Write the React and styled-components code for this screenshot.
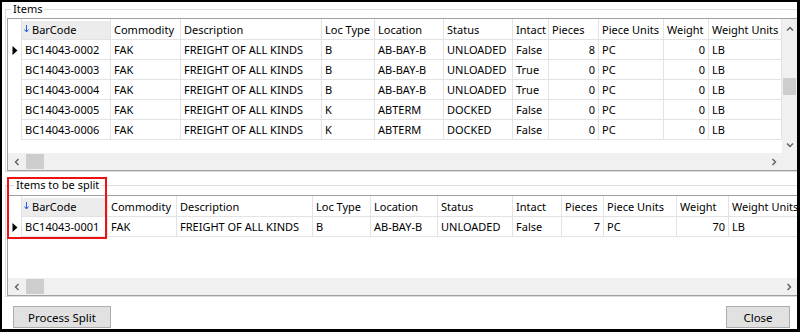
import React from "react";
import styled, { createGlobalStyle } from "styled-components";

const GlobalStyle = createGlobalStyle`
  html, body {
    margin: 0;
    padding: 0;
    background: #000;
  }
  body {
    font-family: "Noto Sans", "Liberation Sans", sans-serif;
    font-size: 11px;
    color: #000;
  }
  * {
    box-sizing: border-box;
  }
`;

const Window = styled.div`
  width: 800px;
  height: 332px;
  border-style: solid;
  border-color: #000;
  border-width: 2px 3px 3px 2px;
  background: #fff;
  display: flex;
  flex-direction: column;
  overflow: hidden;
`;

const GroupBox = styled.fieldset`
  flex: none;
  min-width: 0;
  margin: 0 0 0 3px;
  padding: 2px 0 0 1px;
  border: 1px solid #dcdcdc;
  border-right: none;
`;

const Legend = styled.legend`
  margin-left: ${(p) => p.$indent}px;
  padding: 0 2px;
  line-height: ${(p) => p.$lh}px;
  font-size: 11px;
`;

const SplitSection = styled.div`
  position: relative;
  margin-top: 5px;
`;

const Annotation = styled.div`
  position: absolute;
  left: 5px;
  top: 0;
  width: 100px;
  height: 62px;
  border: 2px solid #ee1111;
  pointer-events: none;
`;

/* grid */

const GridFrame = styled.div`
  height: ${(p) => p.$h}px;
  border-top: 1px solid #a0a0a0;
  border-left: 1px solid #a0a0a0;
  border-bottom: 1px solid #a0a0a0;
  display: flex;
  flex-direction: column;
  overflow: hidden;
`;

const GridMain = styled.div`
  flex: 1;
  min-height: 0;
  display: flex;
`;

const GridBody = styled.div`
  flex: 1;
  min-width: 0;
  overflow: hidden;
  background: #fff;
`;

const Row = styled.div`
  display: flex;
  height: ${(p) => p.$h}px;
`;

const RowHead = styled.div`
  flex: none;
  width: 14px;
  border-right: 1px solid #e3e3e3;
  display: flex;
  align-items: center;
  justify-content: center;
`;

const Cell = styled.div`
  flex: none;
  width: ${(p) => p.$w}px;
  padding: 0 3px;
  border-right: 1px solid #e3e3e3;
  border-bottom: 1px solid #e3e3e3;
  display: flex;
  align-items: center;
  justify-content: ${(p) => (p.$right ? "flex-end" : "flex-start")};
  white-space: nowrap;
  overflow: hidden;
`;

const HeadCell = styled(Cell)`
  justify-content: flex-start;
  padding-left: ${(p) => (p.$sorted ? 2 : 3)}px;
  background: ${(p) =>
    p.$sorted ? "linear-gradient(#fff 0 2px, #ececec 2px)" : "#fff"};
`;

const SortMark = styled.svg`
  flex: none;
  margin-right: 3px;
`;

/* scrollbars */

const VScroll = styled.div`
  flex: none;
  width: 15px;
  background: #f0f0f0;
  display: flex;
  flex-direction: column;
  align-items: center;
`;

const HScroll = styled.div`
  flex: none;
  height: 17px;
  background: #f0f0f0;
  display: flex;
  align-items: center;
`;

const ArrowBtn = styled.div`
  flex: none;
  width: ${(p) => p.$w}px;
  height: ${(p) => p.$h}px;
  display: flex;
  align-items: center;
  justify-content: center;
`;

const Track = styled.div`
  flex: 1;
  display: flex;
  flex-direction: ${(p) => (p.$vertical ? "column" : "row")};
  align-items: ${(p) => (p.$vertical ? "center" : "center")};
`;

const Thumb = styled.div`
  flex: none;
  background: #cdcdcd;
  width: ${(p) => (p.$vertical ? 13 : 18)}px;
  height: ${(p) => (p.$vertical ? 17 : 15)}px;
  margin: ${(p) => (p.$vertical ? "40px 0 0 0" : "0 0 0 1px")};
`;

const Corner = styled.div`
  flex: none;
  width: 15px;
  height: 17px;
  background: #f0f0f0;
`;

/* buttons */

const ButtonBar = styled.div`
  flex: 1;
  display: flex;
  justify-content: space-between;
  align-items: flex-start;
  padding: 9px 7px 0 11px;
`;

const Button = styled.button`
  width: ${(p) => p.$w}px;
  height: 22px;
  padding: 0;
  background: #e1e1e1;
  border: 1px solid #adadad;
  border-radius: 0;
  font-family: "Noto Sans", "Liberation Sans", sans-serif;
  font-size: 11.5px;
  color: #000;
`;

const Chevron = ({ dir }) => {
  const pts = {
    up: "1,4.5 4,1.5 7,4.5",
    down: "1,1.5 4,4.5 7,1.5",
    left: "4.5,1 1.5,4 4.5,7",
    right: "1.5,1 4.5,4 1.5,7",
  }[dir];
  const vert = dir === "up" || dir === "down";
  return (
    <svg width={vert ? 8 : 6} height={vert ? 6 : 8}>
      <polyline points={pts} fill="none" stroke="#606060" strokeWidth="1.4" />
    </svg>
  );
};

const RowMarker = () => (
  <svg width="6" height="9">
    <polygon points="0.5,0 5.5,4.5 0.5,9" fill="#000" />
  </svg>
);

const SortArrow = () => (
  <SortMark width="5" height="8">
    <line x1="2.5" y1="0" x2="2.5" y2="7" stroke="#2060e0" strokeWidth="1" />
    <polyline points="0.5,4.5 2.5,7 4.5,4.5" fill="none" stroke="#2060e0" strokeWidth="1" />
  </SortMark>
);

const DataGrid = ({ columns, rows, height, fillerHeight, vScroll }) => (
  <GridFrame $h={height}>
    <GridMain>
      <GridBody>
        <Row $h={21}>
          <RowHead />
          {columns.map((c, i) => (
            <HeadCell key={c.title} $w={c.w} $sorted={i === 0}>
              {i === 0 && <SortArrow />}
              {c.title}
            </HeadCell>
          ))}
        </Row>
        {rows.map((r, ri) => (
          <Row key={r[0]} $h={20}>
            <RowHead>{ri === 0 && <RowMarker />}</RowHead>
            {columns.map((c, i) => (
              <Cell key={c.title} $w={c.w} $right={c.right}>
                {r[i]}
              </Cell>
            ))}
          </Row>
        ))}
        <div style={{ height: fillerHeight }} />
      </GridBody>
      {vScroll && (
        <VScroll>
          <ArrowBtn $w={15} $h={19}>
            <Chevron dir="up" />
          </ArrowBtn>
          <Track $vertical>
            <Thumb $vertical />
          </Track>
          <ArrowBtn $w={15} $h={17}>
            <Chevron dir="down" />
          </ArrowBtn>
        </VScroll>
      )}
    </GridMain>
    <HScroll>
      <ArrowBtn $w={17} $h={17}>
        <Chevron dir="left" />
      </ArrowBtn>
      <Track>
        <Thumb />
      </Track>
      <ArrowBtn $w={17} $h={17}>
        <Chevron dir="right" />
      </ArrowBtn>
      {vScroll && <Corner />}
    </HScroll>
  </GridFrame>
);

const itemColumns = [
  { title: "BarCode", w: 89 },
  { title: "Commodity", w: 70 },
  { title: "Description", w: 141 },
  { title: "Loc Type", w: 53 },
  { title: "Location", w: 69 },
  { title: "Status", w: 69 },
  { title: "Intact", w: 36 },
  { title: "Pieces", w: 50, right: true },
  { title: "Piece Units", w: 65 },
  { title: "Weight", w: 45, right: true },
  { title: "Weight Units", w: 73 },
];

const splitColumns = [
  { title: "BarCode", w: 86 },
  { title: "Commodity", w: 69 },
  { title: "Description", w: 136 },
  { title: "Loc Type", w: 58 },
  { title: "Location", w: 67 },
  { title: "Status", w: 75 },
  { title: "Intact", w: 49 },
  { title: "Pieces", w: 42, right: true },
  { title: "Piece Units", w: 73 },
  { title: "Weight", w: 52, right: true },
  { title: "Weight Units", w: 82 },
];

const FAK = "FREIGHT OF ALL KINDS";

const items = [
  ["BC14043-0002", "FAK", FAK, "B", "AB-BAY-B", "UNLOADED", "False", "8", "PC", "0", "LB"],
  ["BC14043-0003", "FAK", FAK, "B", "AB-BAY-B", "UNLOADED", "True", "0", "PC", "0", "LB"],
  ["BC14043-0004", "FAK", FAK, "B", "AB-BAY-B", "UNLOADED", "True", "0", "PC", "0", "LB"],
  ["BC14043-0005", "FAK", FAK, "K", "ABTERM", "DOCKED", "False", "0", "PC", "0", "LB"],
  ["BC14043-0006", "FAK", FAK, "K", "ABTERM", "DOCKED", "False", "0", "PC", "0", "LB"],
];

const splitItems = [
  ["BC14043-0001", "FAK", FAK, "B", "AB-BAY-B", "UNLOADED", "False", "7", "PC", "70", "LB"],
];

const App = () => (
  <>
    <GlobalStyle />
    <Window>
      <GroupBox>
        <Legend $indent={4} $lh={14}>
          Items
        </Legend>
        <DataGrid
          columns={itemColumns}
          rows={items}
          height={153}
          fillerHeight={13}
          vScroll
        />
      </GroupBox>
      <SplitSection>
        <GroupBox>
          <Legend $indent={7} $lh={16}>
            Items to be split
          </Legend>
          <DataGrid
            columns={splitColumns}
            rows={splitItems}
            height={101}
            fillerHeight={41}
          />
        </GroupBox>
        <Annotation />
      </SplitSection>
      <ButtonBar>
        <Button $w={98}>Process Split</Button>
        <Button $w={64}>Close</Button>
      </ButtonBar>
    </Window>
  </>
);

export default App;
